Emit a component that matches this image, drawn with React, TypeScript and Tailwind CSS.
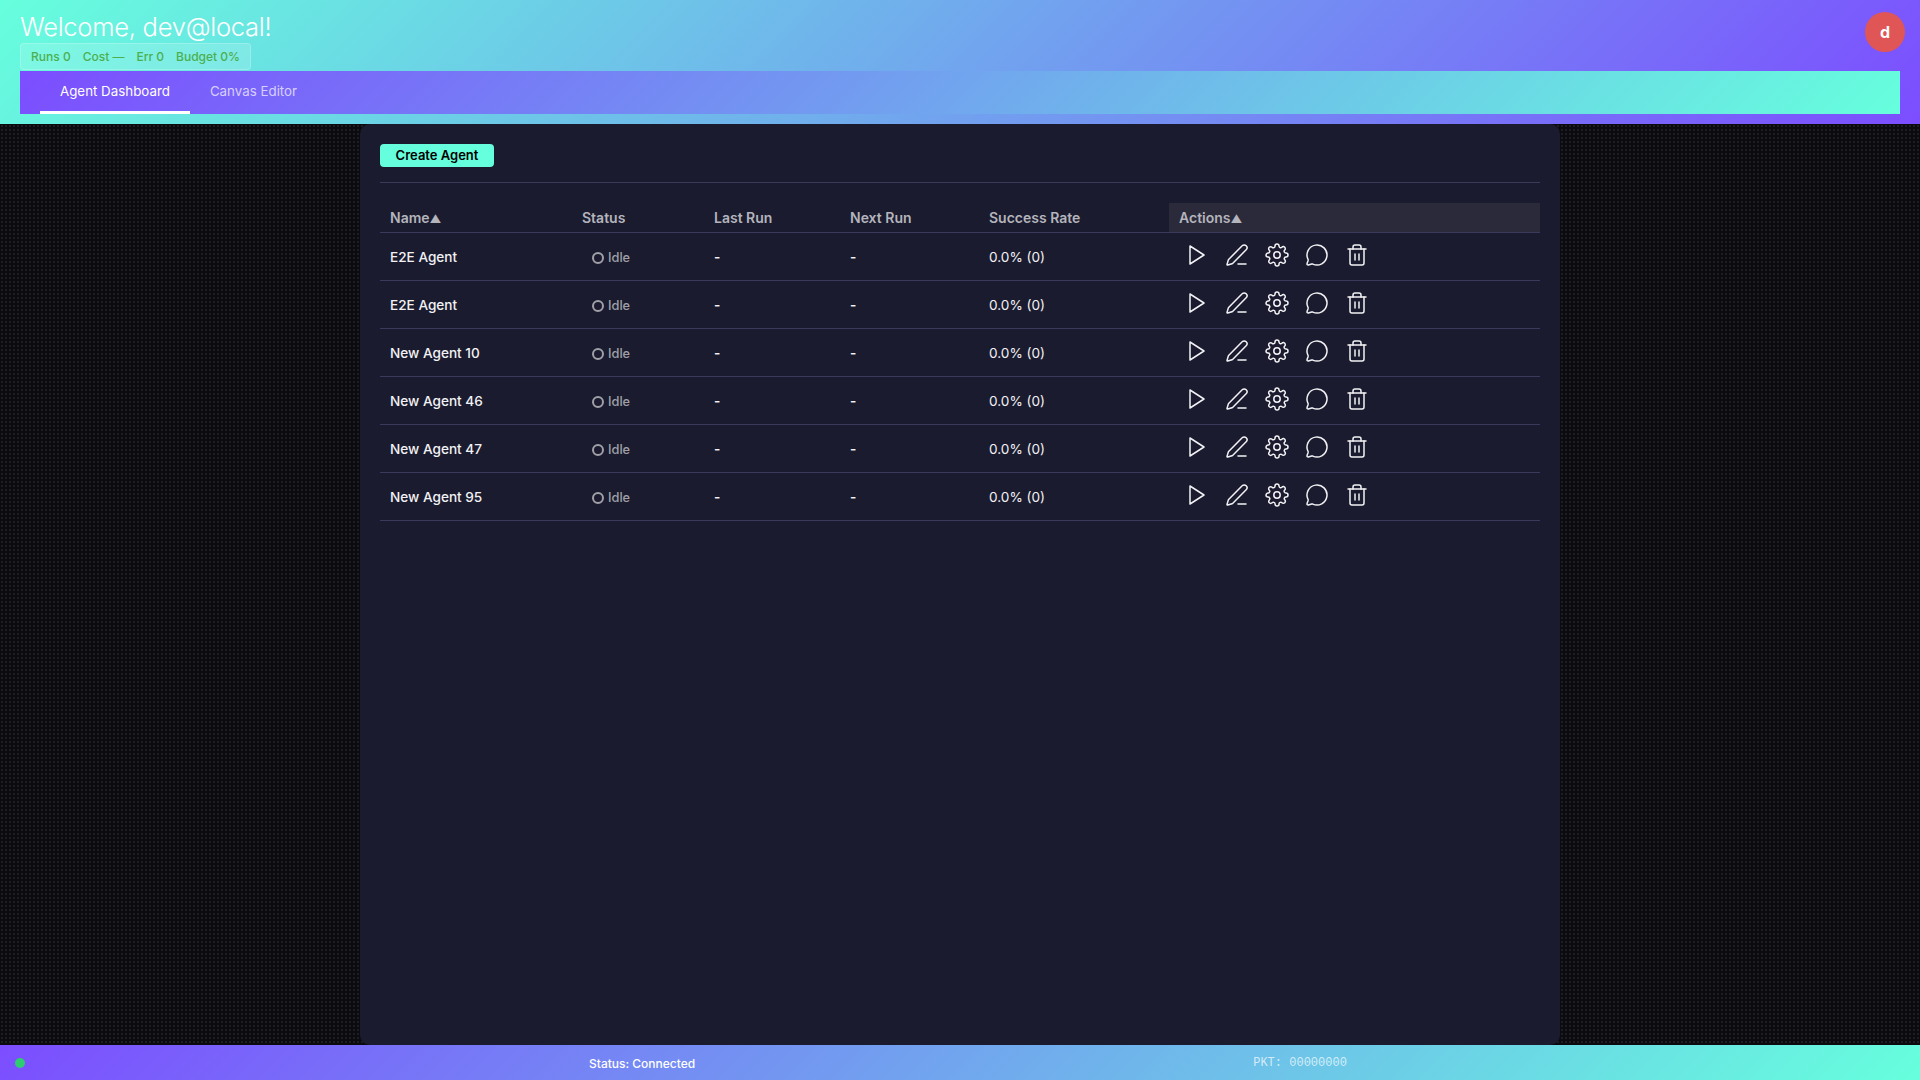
import { PenLine, MessageCircle, Trash2 } from "lucide-react";

const agents = ["E2E Agent", "E2E Agent", "New Agent 10", "New Agent 46", "New Agent 47", "New Agent 95"];

function PlayIcon() {
  return (
    <svg width="24" height="24" viewBox="0 0 24 24" fill="none" stroke="currentColor" strokeWidth="1.5" strokeLinejoin="round">
      <polygon points="5 3 19 12 5 21 5 3" />
    </svg>
  );
}

function GearIcon() {
  return (
    <svg width="24" height="24" viewBox="0 0 24 24" fill="none" stroke="currentColor" strokeWidth="1.5" strokeLinecap="round" strokeLinejoin="round">
      <circle cx="12" cy="12" r="3.2" />
      <path d="M19.4 15a1.65 1.65 0 0 0 .33 1.82l.06.06a2 2 0 0 1 0 2.83 2 2 0 0 1-2.83 0l-.06-.06a1.65 1.65 0 0 0-1.82-.33 1.65 1.65 0 0 0-1 1.51V21a2 2 0 0 1-2 2 2 2 0 0 1-2-2v-.09A1.65 1.65 0 0 0 9 19.4a1.65 1.65 0 0 0-1.82.33l-.06.06a2 2 0 0 1-2.83 0 2 2 0 0 1 0-2.83l.06-.06a1.65 1.65 0 0 0 .33-1.82 1.65 1.65 0 0 0-1.51-1H3a2 2 0 0 1-2-2 2 2 0 0 1 2-2h.09A1.65 1.65 0 0 0 4.6 9a1.65 1.65 0 0 0-.33-1.82l-.06-.06a2 2 0 0 1 0-2.83 2 2 0 0 1 2.83 0l.06.06a1.65 1.65 0 0 0 1.82.33H9a1.65 1.65 0 0 0 1-1.51V3a2 2 0 0 1 2-2 2 2 0 0 1 2 2v.09a1.65 1.65 0 0 0 1 1.51 1.65 1.65 0 0 0 1.82-.33l.06-.06a2 2 0 0 1 2.83 0 2 2 0 0 1 0 2.83l-.06.06a1.65 1.65 0 0 0-.33 1.82V9a1.65 1.65 0 0 0 1.51 1H21a2 2 0 0 1 2 2 2 2 0 0 1-2 2h-.09a1.65 1.65 0 0 0-1.51 1z" />
    </svg>
  );
}

function Row({ name }: { name: string }) {
  return (
    <tr className="h-[48px] border-b border-[#3a3a5a] text-[13.6px] text-[#f2f2f5]">
      <td className="px-[10px] pt-[2px] font-medium">{name}</td>
      <td className="px-[10px] pt-[3px]">
        <span className="ml-[10px] flex items-center gap-[4px] text-[12.8px] font-medium text-[#a0a0a8]">
          <span className="h-[12px] w-[12px] rounded-full border-2 border-[#a0a0a8]" />
          Idle
        </span>
      </td>
      <td className="px-[10px] pt-[2px] font-semibold">-</td>
      <td className="px-[10px] pt-[2px] font-semibold">-</td>
      <td className="px-[10px] pt-[2px]">0.0% (0)</td>
      <td className="px-[10px]">
        <div className="-mt-[3px] -ml-[2px] flex items-center">
          <button className="flex h-[32px] w-[40px] items-center justify-center text-[#f2f2f5]"><PlayIcon /></button>
          <button className="flex h-[32px] w-[40px] items-center justify-center text-[#f2f2f5]"><PenLine size={24} strokeWidth={1.5} /></button>
          <button className="flex h-[32px] w-[40px] items-center justify-center text-[#f2f2f5]"><GearIcon /></button>
          <button className="flex h-[32px] w-[40px] items-center justify-center text-[#f2f2f5]"><MessageCircle size={24} strokeWidth={1.5} /></button>
          <button className="flex h-[32px] w-[40px] items-center justify-center text-[#f2f2f5]"><Trash2 size={24} strokeWidth={1.5} /></button>
        </div>
      </td>
    </tr>
  );
}

export default function App() {
  return (
    <div className="flex h-[1080px] w-[1920px] flex-col overflow-hidden bg-[#0a0a0f] font-['Inter','Liberation_Sans',sans-serif]">
      <header className="relative h-[124px] shrink-0 bg-[linear-gradient(135deg,#66ffdd,#7c4dff)] px-[20px] pt-[11px]">
        <h1 className="text-[25.6px] leading-[32px] font-light tracking-[-0.3px] text-white">Welcome, dev@local!</h1>
        <div className="flex h-[27px] w-[231px] items-center gap-[12px] rounded-[4px] border border-white/20 bg-white/15 px-[10px] text-[12px] font-medium whitespace-nowrap text-[#4caf50]">
          <span>Runs 0</span>
          <span>Cost —</span>
          <span>Err 0</span>
          <span>Budget 0%</span>
        </div>
        <nav className="mt-[1px] flex h-[43px] bg-[linear-gradient(135deg,#7c4dff,#66ffdd)] pl-[20px] text-[13.33px]">
          <a className="flex items-center border-b-[3px] border-white px-[20px] pt-[2px] text-white">Agent Dashboard</a>
          <a className="flex items-center border-b-[3px] border-transparent px-[20px] pt-[2px] text-white/70">Canvas Editor</a>
        </nav>
        <div className="absolute top-[12px] left-[1865px] flex h-[40px] w-[40px] items-center justify-center rounded-full bg-[#e05555] text-[16px] font-bold text-white">
          d
        </div>
      </header>

      <main className="flex min-h-0 flex-1 justify-center bg-[radial-gradient(circle,#1d1d23_1px,transparent_1px)] bg-[length:4px_4px]">
        <div className="w-[1200px] rounded-[10px] bg-[#1a1b2e] p-[20px]">
          <button className="block h-[23px] w-[114px] rounded-[4px] bg-[#66ffdd] text-[13px] font-semibold text-black">
            Create Agent
          </button>
          <div className="mt-[15px] mb-[20px] border-b border-[#3a3a5a]" />
          <table className="w-[1160px] table-fixed border-collapse text-left">
            <colgroup>
              <col className="w-[192px]" />
              <col className="w-[132px]" />
              <col className="w-[136px]" />
              <col className="w-[139px]" />
              <col className="w-[190px]" />
              <col className="w-[371px]" />
            </colgroup>
            <thead>
              <tr className="h-[29px] border-b border-[#3a3a5a] text-[14px] text-[#b4b4bc]">
                <th className="px-[10px] font-semibold">Name<span className="text-[11.5px]">▲</span></th>
                <th className="px-[10px] font-semibold">Status</th>
                <th className="px-[10px] font-semibold">Last Run</th>
                <th className="px-[10px] font-semibold">Next Run</th>
                <th className="px-[10px] font-semibold">Success Rate</th>
                <th className="bg-[#2a2a3a] px-[10px] font-semibold">Actions<span className="text-[11.5px]">▲</span></th>
              </tr>
            </thead>
            <tbody>
              {agents.map((a, i) => (
                <Row key={i} name={a} />
              ))}
            </tbody>
          </table>
        </div>
      </main>

      <footer className="flex h-[35px] shrink-0 items-center bg-[linear-gradient(135deg,#7c4dff,#66ffdd)] pl-[15px] text-white">
        <span className="h-[10px] w-[10px] rounded-full bg-[#2ecc71]" />
        <span className="mt-[2px] ml-[564px] text-[12px] font-medium">Status: Connected</span>
        <span className="ml-[558px] font-['Liberation_Mono',monospace] text-[12px] text-white/70">PKT: 00000000</span>
      </footer>
    </div>
  );
}
